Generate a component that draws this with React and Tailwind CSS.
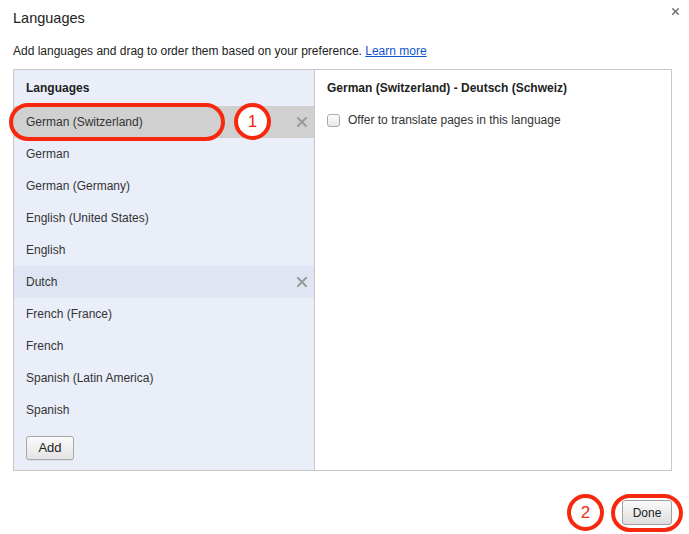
import { X } from 'lucide-react'

const LANGUAGES = [
  { name: 'German (Switzerland)', selected: true },
  { name: 'German' },
  { name: 'German (Germany)' },
  { name: 'English (United States)' },
  { name: 'English' },
  { name: 'Dutch', hover: true },
  { name: 'French (France)' },
  { name: 'French' },
  { name: 'Spanish (Latin America)' },
  { name: 'Spanish' },
]

function RemoveIcon() {
  return (
    <svg width="10" height="10" viewBox="0 0 10 10" className="text-[#9a9a9a]">
      <path d="M1 1 L9 9 M9 1 L1 9" stroke="currentColor" strokeWidth="2" strokeLinecap="square" />
    </svg>
  )
}

function LanguageRow({ name, selected, hover }) {
  const bg = selected ? 'bg-[#d0d0d0]' : hover ? 'bg-[#dfe5f2]' : ''
  return (
    <div className={`flex h-[32px] items-center justify-between pl-[12px] pr-[7px] ${bg}`}>
      <span>{name}</span>
      {(selected || hover) && <RemoveIcon />}
    </div>
  )
}

export default function App() {
  return (
    <div className="relative h-[534px] w-[689px] overflow-hidden bg-white text-[12px] text-[#333] [font-family:'Liberation_Sans',Arial,sans-serif]">
      <div className="px-[13px] pt-[9px] text-[14.5px] leading-[18px] text-[#222]">Languages</div>
      <button className="absolute right-[8px] top-[6px] text-[#777]" aria-label="Close">
        <X className="h-[11px] w-[11px]" strokeWidth={3.5} />
      </button>

      <p className="mt-[16px] px-[13px] leading-[16px] text-[#222]">
        Add languages and drag to order them based on your preference.{' '}
        <a className="text-[#1155cc] underline">Learn more</a>
      </p>

      <div className="ml-[13px] mt-[10px] flex h-[402px] w-[659px] border border-[#c8c8c8] text-[#333]">
        <div className="flex w-[301px] flex-col border-r border-[#c8c8c8] bg-[#eaeef9]">
          <div className="flex h-[36px] items-center pl-[12px] font-bold text-[#222]">Languages</div>
          {LANGUAGES.map((lang) => (
            <LanguageRow key={lang.name} {...lang} />
          ))}
          <div className="pl-[12px] pt-[10px]">
            <button className="h-[24px] w-[48px] rounded-[3px] border border-[#a8a8a8] bg-gradient-to-b from-[#fafafa] to-[#e4e4e4] text-[13px] text-[#222] shadow-[0_1px_0_rgba(0,0,0,0.06)]">
              Add
            </button>
          </div>
        </div>
        <div className="flex-1 pl-[12px]">
          <div className="flex h-[36px] items-center font-bold text-[#222]">German (Switzerland) - Deutsch (Schweiz)</div>
          <label className="flex h-[28px] items-center gap-[8px]">
            <span className="h-[13px] w-[13px] rounded-[3px] border border-[#aaa] bg-gradient-to-b from-[#fdfdfd] to-[#e8e8e8]" />
            <span>Offer to translate pages in this language</span>
          </label>
        </div>
      </div>

      <div className="mt-[29px] flex justify-end pr-[17px]">
        <button className="h-[25px] w-[50px] rounded-[3px] border border-[#a0a0a0] bg-gradient-to-b from-[#fafafa] to-[#dedede] text-[12px] text-[#222]">
          Done
        </button>
      </div>

      {/* annotations */}
      <div className="pointer-events-none absolute left-[9px] top-[103px] h-[38px] w-[216px] rounded-[19px] border-[4px] border-[#f7280d]" />
      <div className="pointer-events-none absolute left-[234px] top-[103px] flex h-[37px] w-[37px] items-center justify-center rounded-full border-[4px] border-[#f7280d] bg-white text-[17px] text-[#f7280d]">
        1
      </div>
      <div className="pointer-events-none absolute left-[567px] top-[494px] flex h-[37px] w-[37px] items-center justify-center rounded-full border-[4px] border-[#f7280d] bg-white text-[17px] text-[#f7280d]">
        2
      </div>
      <div className="pointer-events-none absolute left-[611px] top-[494px] h-[38px] w-[72px] rounded-[19px] border-[4px] border-[#f7280d]" />
    </div>
  )
}
